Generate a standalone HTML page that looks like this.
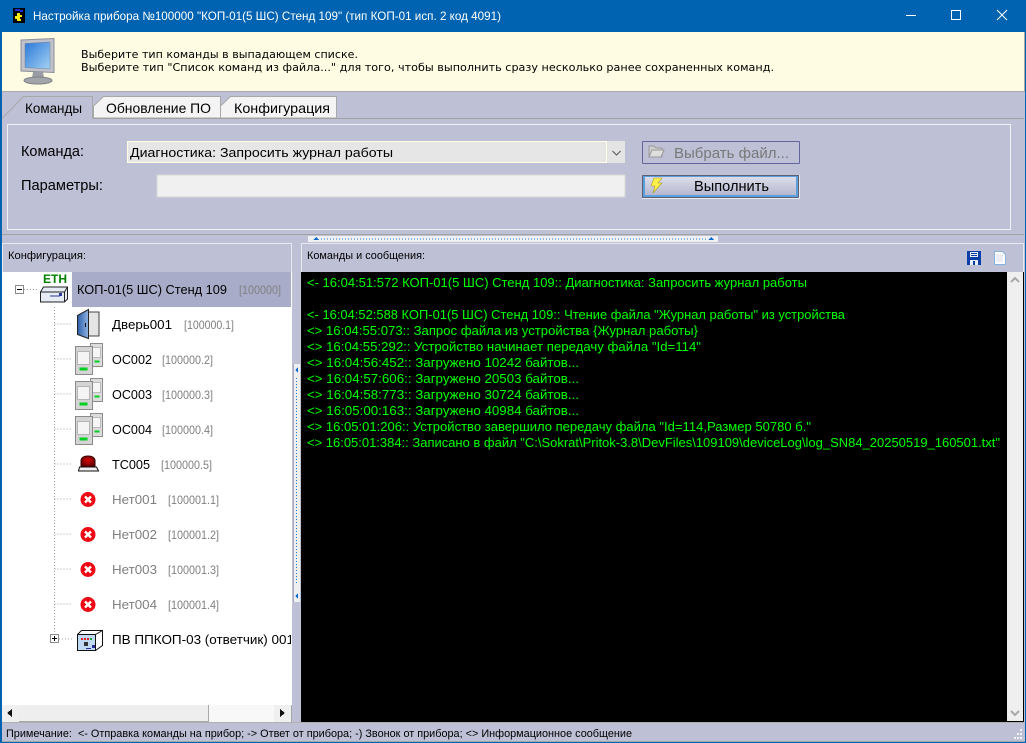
<!DOCTYPE html>
<html lang="ru"><head><meta charset="utf-8"><title>Настройка прибора</title>
<style>
html,body{margin:0;padding:0;width:1026px;height:743px;overflow:hidden;background:#bec0d6}
svg{display:block;position:absolute;left:0;top:0}
text{font-family:"Liberation Sans",sans-serif;font-size:12px;fill:#000;white-space:pre}
.v{font-family:"DejaVu Sans",sans-serif;font-size:11px}
.g{fill:#808080}
.l{fill:#00ff00;font-size:12.5px}
.f{font-size:14.5px}
.t{font-size:14px}
.s{font-size:11px}
.d{fill:none;stroke:#a0a0a0;stroke-dasharray:1 2}
</style></head><body>
<svg width="1026" height="743" viewBox="0 0 1026 743" xmlns="http://www.w3.org/2000/svg" shape-rendering="crispEdges">
<defs>
<linearGradient id="scr" x1="0" y1="0" x2="1" y2="1"><stop offset="0" stop-color="#2a78d8"/><stop offset="1" stop-color="#a4d2f4"/></linearGradient>
<linearGradient id="btn" x1="0" y1="0" x2="0" y2="1"><stop offset="0" stop-color="#dcdde9"/><stop offset="1" stop-color="#b6b8d0"/></linearGradient>
<linearGradient id="door" x1="0" y1="0" x2="1" y2="0"><stop offset="0" stop-color="#2f5fa8"/><stop offset="1" stop-color="#8fb4e4"/></linearGradient>
<radialGradient id="lamp" cx=".5" cy=".4" r=".6"><stop offset="0" stop-color="#d80000"/><stop offset="1" stop-color="#5a0000"/></radialGradient>
<g id="os">
<rect x="15" y="-17" width="12" height="23" fill="#dcdcdc" stroke="#8c8c8c"/>
<rect x="17" y="-13" width="8" height="10" fill="#f6f6f6" stroke="#bbb"/>
<rect x="19" y="0" width="5" height="2" fill="#00d020"/>
<rect x="0" y="-14" width="17" height="28" fill="#d4d4d4" stroke="#8a8a8a"/>
<rect x="2" y="-9" width="12" height="13" fill="#f4f4f4" stroke="#b5b5b5"/>
<rect x="4" y="7" width="8" height="3" fill="#00d020"/>
</g>
<g id="err"><circle cx="0" cy="0" r="7.5" fill="#ee0a14" shape-rendering="auto"/><path d="M-3-3L3 3M3-3L-3 3" stroke="#fff" stroke-width="2.4" shape-rendering="auto"/></g>
</defs>

<!-- window frame + title -->
<rect width="1026" height="743" fill="#0063b1"/>
<rect x="2" y="32" width="1023" height="709" fill="#bec0d6"/>
<rect x="13" y="8" width="12" height="15" fill="#000"/>
<path d="M17 13h3v2h2v2h-2v2h1v2h-4v-2h-2v-3h2z" fill="#f6ea14"/>
<path d="M15 9h5v1h3v2h-3v-1h-5z" fill="#1a2fd0"/>
<text x="33" y="20" textLength="468" lengthAdjust="spacingAndGlyphs" style="fill:#fff">Настройка прибора №100000 "КОП-01(5 ШС) Стенд 109" (тип КОП-01 исп. 2 код 4091)</text>
<rect x="906" y="15" width="10" height="1" fill="#fff"/>
<rect x="951.5" y="10.5" width="9" height="9" fill="none" stroke="#fff"/>
<path d="M997 10l10 10M1007 10l-10 10" stroke="#fff" shape-rendering="auto"/>

<!-- info band -->
<rect x="2" y="32" width="1022" height="59" fill="#fefde4"/>
<rect x="2" y="91" width="1022" height="1" fill="#a8a8a8"/>
<rect x="1024" y="32" width="1" height="60" fill="#a8a8a8"/>
<g shape-rendering="auto">
<path d="M21 40l33-1.500v34l-33-1.500z" fill="#bfc2ca" stroke="#8b8e96"/>
<path d="M25 43.500l25-1.500v27l-25-1.500z" fill="url(#scr)" stroke="#6f7f96" stroke-width=".5"/>
<path d="M33 72h10l1 6h-12z" fill="#9a9da5"/>
<ellipse cx="38" cy="80.500" rx="14" ry="3.500" fill="#a2a5aa" stroke="#7d8086"/>
</g>
<text class="v" x="81" y="58" textLength="277" lengthAdjust="spacingAndGlyphs">Выберите тип команды в выпадающем списке.</text>
<text class="v" x="81" y="71" textLength="693" lengthAdjust="spacingAndGlyphs">Выберите тип "Список команд из файла..." для того, чтобы выполнить сразу несколько ранее сохраненных команд.</text>

<!-- tabs -->
<path d="M2 118.500L23.500 96.500H92.500V118.500" fill="#bec0d6" stroke="#a8a8a8" shape-rendering="auto"/>
<path d="M93.500 118V106L103.500 96.500H220.500V118Z" fill="#f4f4f4" stroke="#a8a8a8" shape-rendering="auto"/>
<path d="M220.500 118V106L230.500 96.500H336.500V118Z" fill="#f4f4f4" stroke="#a8a8a8" shape-rendering="auto"/>
<rect x="93" y="118" width="931" height="1" fill="#a0a0a0"/>
<text class="t" x="25" y="113" textLength="57" lengthAdjust="spacingAndGlyphs">Команды</text>
<text class="t" x="106" y="113" textLength="105" lengthAdjust="spacingAndGlyphs">Обновление ПО</text>
<text class="t" x="234" y="113" textLength="96" lengthAdjust="spacingAndGlyphs">Конфигурация</text>

<!-- command panel -->
<rect x="7.500" y="124.500" width="1003" height="105" fill="none" stroke="#f2f2f4"/>
<rect x="2" y="234" width="1022" height="1" fill="#a0a0a0"/>
<text class="f" x="21" y="156" textLength="63" lengthAdjust="spacingAndGlyphs">Команда:</text>
<text class="f" x="21" y="190" textLength="82" lengthAdjust="spacingAndGlyphs">Параметры:</text>
<rect x="127" y="141" width="498" height="22" fill="#e4e4e4"/>
<rect x="127.500" y="141.500" width="479" height="21" fill="#e6e6e6" stroke="#fefde4" stroke-width="1"/>
<path d="M612.500 151l4 4 4-4" fill="none" stroke="#555" stroke-width="1" shape-rendering="auto"/>
<text x="130" y="157" textLength="263" lengthAdjust="spacingAndGlyphs" style="font-size:13px">Диагностика: Запросить журнал работы</text>
<rect x="157" y="175" width="468" height="22" fill="#f0f0f0" stroke="#d6d6d6"/>
<rect x="642.500" y="141.500" width="157" height="22" rx="1" fill="none" stroke="#62649c"/>
<g shape-rendering="auto"><path d="M649 157v-11h5l2 2h6v9z" fill="#cfcfcf" stroke="#9a9a9a"/><path d="M649 157l3-7h12l-3 7z" fill="#dedede" stroke="#9a9a9a"/></g>
<text class="f" x="674" y="158" textLength="115" lengthAdjust="spacingAndGlyphs" style="fill:#787878">Выбрать файл...</text>
<rect x="642" y="175" width="158" height="24" rx="1" fill="#e9e9f1"/>
<rect x="642" y="175" width="157" height="23" rx="1" fill="#5e6070"/>
<rect x="643" y="176" width="155" height="21" fill="#5b9fdc"/>
<rect x="645" y="177" width="151" height="18" fill="url(#btn)"/>
<path d="M654 178h8l-4 5h4l-9 10 2-7h-4z" fill="#fff04c" stroke="#a89a20" stroke-width=".6" shape-rendering="auto"/>
<text class="f" x="694" y="191" textLength="75" lengthAdjust="spacingAndGlyphs">Выполнить</text>

<!-- horizontal splitter -->
<rect x="308" y="236" width="410" height="6" fill="#f0f0f0"/>
<path d="M321 239H708" stroke="#1a7ad8" stroke-dasharray="1 2" fill="none"/>
<path d="M316 237l3 3h-6zM711 237l3 3h-6z" fill="#0a6ad0"/>

<!-- left pane -->
<rect x="2" y="243" width="290" height="1" fill="#e8e8ee"/>
<rect x="2" y="243" width="1" height="29" fill="#e8e8ee"/>
<rect x="291" y="243" width="1" height="29" fill="#e8e8ee"/>
<text class="s" x="8" y="259" textLength="78" lengthAdjust="spacingAndGlyphs">Конфигурация:</text>
<rect x="2" y="272" width="290" height="450" fill="#fff"/>
<rect x="72" y="272" width="219" height="35" fill="#a8acc8"/>

<!-- tree lines -->
<path class="d" d="M54.500 307V639M54.500 324H72M54.500 359H72M54.500 394H72M54.500 429H72M54.500 464H72M54.500 499H72M54.500 534H72M54.500 569H72M54.500 604H72M59 639H72M24 289.500H38"/>
<rect x="15.500" y="285.500" width="8" height="8" fill="#fff" stroke="#8a8a8a"/>
<rect x="17" y="289" width="5" height="1" fill="#000"/>
<rect x="50.500" y="634.500" width="8" height="8" fill="#fff" stroke="#8a8a8a"/>
<path d="M52 638.500h5M54.500 636v5" stroke="#000"/>

<!-- ETH device -->
<text x="43" y="283" textLength="24" lengthAdjust="spacing" style="font-size:12px;font-weight:bold;fill:#008000">ETH</text>
<g shape-rendering="auto">
<path d="M40.500 292l3-5h24v12l-3 3H40.500z" fill="#e6ecf4" stroke="#222"/>
<path d="M40.500 292h24l3-5M64.500 292v10" fill="none" stroke="#222"/>
<path d="M50 296h10" stroke="#2a3a9a"/><rect x="59" y="293" width="3" height="3" fill="#2a3a9a"/>
</g>
<text x="77" y="294" textLength="150" lengthAdjust="spacingAndGlyphs" style="font-size:13px">КОП-01(5 ШС) Стенд 109</text>
<text class="g" x="239" y="294" textLength="42" lengthAdjust="spacingAndGlyphs">[100000]</text>

<!-- door -->
<rect x="87" y="312" width="12" height="24" fill="#e4e4e4" stroke="#444"/>
<path d="M77.500 315.500L88.500 309.500V338.500L77.500 334.500Z" fill="url(#door)" stroke="#222" shape-rendering="auto"/>
<rect x="85" y="323" width="1" height="4" fill="#111"/>
<text x="112" y="329" textLength="60" lengthAdjust="spacingAndGlyphs" style="font-size:13px">Дверь001</text>
<text class="g" x="184" y="329" textLength="50" lengthAdjust="spacingAndGlyphs">[100000.1]</text>

<!-- OS -->
<use href="#os" x="75.500" y="360.500"/>
<text x="112" y="364" textLength="40" lengthAdjust="spacingAndGlyphs" style="font-size:13px">ОС002</text>
<text class="g" x="162" y="364" textLength="51" lengthAdjust="spacingAndGlyphs">[100000.2]</text>
<use href="#os" x="75.500" y="395.500"/>
<text x="112" y="399" textLength="40" lengthAdjust="spacingAndGlyphs" style="font-size:13px">ОС003</text>
<text class="g" x="162" y="399" textLength="51" lengthAdjust="spacingAndGlyphs">[100000.3]</text>
<use href="#os" x="75.500" y="430.500"/>
<text x="112" y="434" textLength="40" lengthAdjust="spacingAndGlyphs" style="font-size:13px">ОС004</text>
<text class="g" x="162" y="434" textLength="51" lengthAdjust="spacingAndGlyphs">[100000.4]</text>

<!-- lamp -->
<g shape-rendering="auto">
<path d="M81 467v-7q1-4 7-4t7 4v7z" fill="url(#lamp)" stroke="#300"/>
<path d="M79.500 467h17l2 4h-20z" fill="#f0f0f0" stroke="#111"/>
</g>
<text x="112" y="469" textLength="38" lengthAdjust="spacingAndGlyphs" style="font-size:13px">ТС005</text>
<text class="g" x="161" y="469" textLength="51" lengthAdjust="spacingAndGlyphs">[100000.5]</text>

<!-- missing -->
<use href="#err" x="88" y="499.500"/>
<text class="g" x="112" y="504" textLength="45" lengthAdjust="spacingAndGlyphs" style="font-size:13px">Нет001</text>
<text class="g" x="168" y="504" textLength="51" lengthAdjust="spacingAndGlyphs">[100001.1]</text>
<use href="#err" x="88" y="534.500"/>
<text class="g" x="112" y="539" textLength="45" lengthAdjust="spacingAndGlyphs" style="font-size:13px">Нет002</text>
<text class="g" x="168" y="539" textLength="51" lengthAdjust="spacingAndGlyphs">[100001.2]</text>
<use href="#err" x="88" y="569.500"/>
<text class="g" x="112" y="574" textLength="45" lengthAdjust="spacingAndGlyphs" style="font-size:13px">Нет003</text>
<text class="g" x="168" y="574" textLength="51" lengthAdjust="spacingAndGlyphs">[100001.3]</text>
<use href="#err" x="88" y="604.500"/>
<text class="g" x="112" y="609" textLength="45" lengthAdjust="spacingAndGlyphs" style="font-size:13px">Нет004</text>
<text class="g" x="168" y="609" textLength="51" lengthAdjust="spacingAndGlyphs">[100001.4]</text>

<!-- PV -->
<path d="M77.500 634.500l4-4h21v15l-7 5M95.500 634.500l7-4" fill="#fff" stroke="#111" shape-rendering="auto"/>
<rect x="77.500" y="634.500" width="18" height="16" fill="#c0daf4" stroke="#111"/>
<rect x="81" y="638" width="2" height="2" fill="#e02020"/><rect x="84" y="638" width="2" height="2" fill="#e02020"/><rect x="87" y="638" width="2" height="2" fill="#e02020"/><rect x="90" y="638" width="2" height="2" fill="#10a040"/>
<rect x="84" y="642" width="4" height="4" fill="#333"/><rect x="92" y="645" width="3" height="3" fill="#2a2a9a"/><rect x="86" y="648" width="5" height="1" fill="#2a2a9a"/>
<svg x="0" y="620" width="291" height="40"><text x="112" y="24" textLength="182" lengthAdjust="spacingAndGlyphs" style="font-size:13px">ПВ ППКОП-03 (ответчик) 001</text></svg>

<!-- tree h-scrollbar -->
<rect x="2" y="705" width="290" height="17" fill="#f0f0f0"/>
<rect x="19" y="705" width="189" height="17" fill="#eeeeee"/>
<rect x="208" y="705" width="66" height="17" fill="#f8f8f8"/>
<rect x="208" y="705" width="1" height="17" fill="#a8a8a8"/>
<rect x="19" y="721" width="190" height="1" fill="#a8a8a8"/>
<path d="M12 709v8l-5-4zM280 709v8l5-4z" fill="#111"/>
<rect x="291" y="705" width="1" height="17" fill="#a8a8a8"/>

<!-- vertical splitter -->
<rect x="293" y="364" width="7" height="238" fill="#efefef"/>
<rect x="293" y="364" width="1" height="238" fill="#a8a8c0"/>
<path d="M296.500 378V585" stroke="#1a7ad8" stroke-dasharray="1 2"/>
<path d="M298 367v6l-3-3zM298 593v6l-3-3z" fill="#0a6ad0"/>

<!-- right pane -->
<rect x="301" y="243" width="723" height="1" fill="#e8e8ee"/>
<rect x="301" y="243" width="1" height="29" fill="#e8e8ee"/>
<rect x="1023" y="243" width="1" height="29" fill="#e8e8ee"/>
<text class="s" x="307" y="259" textLength="118" lengthAdjust="spacingAndGlyphs">Команды и сообщения:</text>
<rect x="967" y="251" width="14" height="14" fill="#0a3fa8"/>
<rect x="970" y="252" width="8" height="5" fill="#e8f0ff"/><rect x="971" y="253" width="6" height="1" fill="#0a3fa8"/><rect x="971" y="255" width="6" height="1" fill="#0a3fa8"/>
<rect x="970" y="260" width="8" height="5" fill="#e8f0ff"/><rect x="973" y="261" width="2" height="4" fill="#0a3fa8"/>
<path d="M994.500 251.500h8l3 3v10h-11z" fill="#fff" stroke="#8ab0dc"/>
<path d="M996 255h7M996 257h7M996 259h7M996 261h7" stroke="#d4dcea"/>

<rect x="301" y="272" width="706" height="450" fill="#000"/>
<rect x="1007" y="272" width="16" height="449" fill="#efefef"/>
<path d="M1011 282l4-4 4 4M1011 711l4 4 4-4" fill="none" stroke="#a8a8a8" stroke-width="2" shape-rendering="auto"/>
<rect x="1023" y="272" width="1" height="450" fill="#000"/>
<rect x="1007" y="721" width="17" height="1" fill="#000"/>

<!-- log -->
<g shape-rendering="auto">
<text class="l" x="307" y="287" textLength="500" lengthAdjust="spacingAndGlyphs">&lt;- 16:04:51:572 КОП-01(5 ШС) Стенд 109:: Диагностика: Запросить журнал работы</text>
<text class="l" x="307" y="319" textLength="538" lengthAdjust="spacingAndGlyphs">&lt;- 16:04:52:588 КОП-01(5 ШС) Стенд 109:: Чтение файла "Журнал работы" из устройства</text>
<text class="l" x="307" y="335" textLength="391" lengthAdjust="spacingAndGlyphs">&lt;&gt; 16:04:55:073:: Запрос файла из устройства {Журнал работы}</text>
<text class="l" x="307" y="351" textLength="394" lengthAdjust="spacingAndGlyphs">&lt;&gt; 16:04:55:292:: Устройство начинает передачу файла "Id=114"</text>
<text class="l" x="307" y="367" textLength="272" lengthAdjust="spacingAndGlyphs">&lt;&gt; 16:04:56:452:: Загружено 10242 байтов...</text>
<text class="l" x="307" y="383" textLength="272" lengthAdjust="spacingAndGlyphs">&lt;&gt; 16:04:57:606:: Загружено 20503 байтов...</text>
<text class="l" x="307" y="399" textLength="272" lengthAdjust="spacingAndGlyphs">&lt;&gt; 16:04:58:773:: Загружено 30724 байтов...</text>
<text class="l" x="307" y="415" textLength="272" lengthAdjust="spacingAndGlyphs">&lt;&gt; 16:05:00:163:: Загружено 40984 байтов...</text>
<text class="l" x="307" y="431" textLength="504" lengthAdjust="spacingAndGlyphs">&lt;&gt; 16:05:01:206:: Устройство завершило передачу файла "Id=114,Размер 50780 б."</text>
<text class="l" x="307" y="447" textLength="693" lengthAdjust="spacingAndGlyphs">&lt;&gt; 16:05:01:384:: Записано в файл "C:\Sokrat\Pritok-3.8\DevFiles\109109\deviceLog\log_SN84_20250519_160501.txt"</text>
</g>

<!-- status -->
<rect x="2" y="722" width="1023" height="1" fill="#b0b0b0"/>
<rect x="2" y="723" width="1023" height="18" fill="#bec0d6"/>
<rect x="2" y="741" width="1023" height="1" fill="#a8a8a8"/>
<text class="s" x="6" y="737" textLength="626" lengthAdjust="spacingAndGlyphs">Примечание:  &lt;- Отправка команды на прибор; -&gt; Ответ от прибора; -) Звонок от прибора; &lt;&gt; Информационное сообщение</text>
<path d="M1020 729h2v2h-2zM1017 733h2v2h-2zM1020 733h2v2h-2zM1014 737h2v2h-2zM1017 737h2v2h-2zM1020 737h2v2h-2z" fill="#f4f4f4"/>
</svg>
</body></html>
